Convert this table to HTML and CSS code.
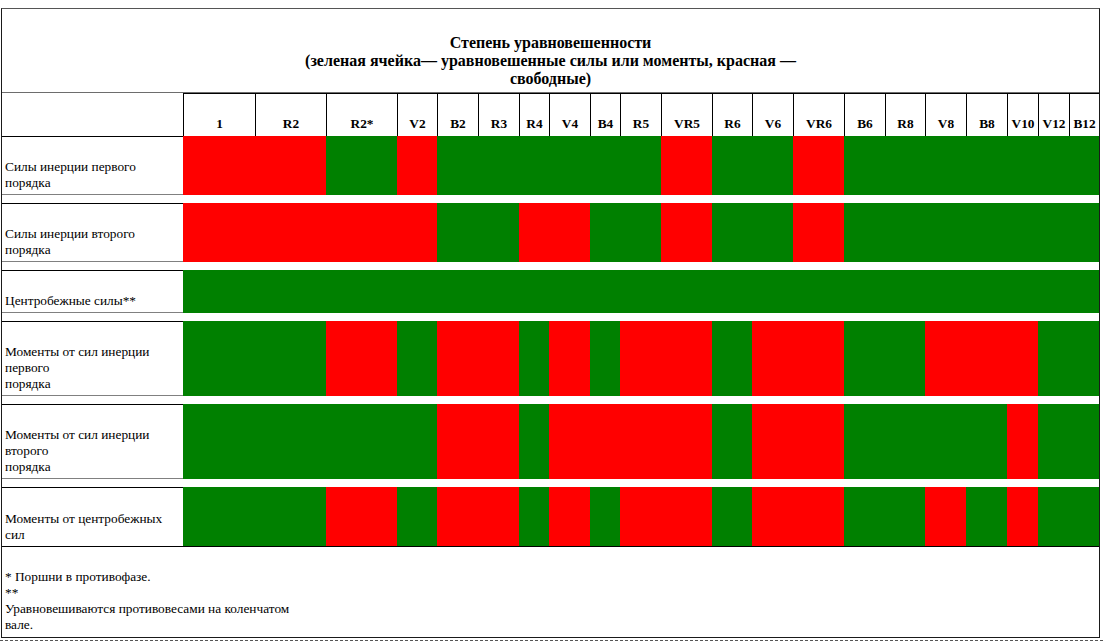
FILE: index.html
```html
<!DOCTYPE html>
<html lang="ru">
<head>
<meta charset="utf-8">
<title>Степень уравновешенности</title>
<link rel="stylesheet" href="styles.css">
</head>
<body>
<div class="page">
  <div class="sheet">
    <div class="title">
      <p class="title-text">Степень уравновешенности<br>(зеленая ячейка— уравновешенные силы или моменты, красная — свободные)</p>
    </div>
    <div class="row head">
      <div class="hcell blank"></div>
      <div class="hcell">1</div><div class="hcell">R2</div><div class="hcell">R2*</div><div class="hcell">V2</div><div class="hcell">B2</div><div class="hcell">R3</div><div class="hcell">R4</div><div class="hcell">V4</div><div class="hcell">B4</div><div class="hcell">R5</div><div class="hcell">VR5</div><div class="hcell">R6</div><div class="hcell">V6</div><div class="hcell">VR6</div><div class="hcell">B6</div><div class="hcell">R8</div><div class="hcell">V8</div><div class="hcell">B8</div><div class="hcell">V10</div><div class="hcell">V12</div><div class="hcell">B12</div>
    </div>

    <div class="row data h59">
      <div class="label">Силы инерции первого<br>порядка</div>
      <div class="c r"></div><div class="c r"></div><div class="c g"></div><div class="c r"></div><div class="c g"></div><div class="c g"></div><div class="c g"></div><div class="c g"></div><div class="c g"></div><div class="c g"></div><div class="c r"></div><div class="c g"></div><div class="c g"></div><div class="c r"></div><div class="c g"></div><div class="c g"></div><div class="c g"></div><div class="c g"></div><div class="c g"></div><div class="c g"></div><div class="c g"></div>
    </div>
    <div class="gap"></div>

    <div class="row data h59">
      <div class="label">Силы инерции второго<br>порядка</div>
      <div class="c r"></div><div class="c r"></div><div class="c r"></div><div class="c r"></div><div class="c g"></div><div class="c g"></div><div class="c r"></div><div class="c r"></div><div class="c g"></div><div class="c g"></div><div class="c r"></div><div class="c g"></div><div class="c g"></div><div class="c r"></div><div class="c g"></div><div class="c g"></div><div class="c g"></div><div class="c g"></div><div class="c g"></div><div class="c g"></div><div class="c g"></div>
    </div>
    <div class="gap"></div>

    <div class="row data h43">
      <div class="label">Центробежные силы**</div>
      <div class="c g span"></div>
    </div>
    <div class="gap"></div>

    <div class="row data h75">
      <div class="label">Моменты от сил инерции<br>первого<br>порядка</div>
      <div class="c g"></div><div class="c g"></div><div class="c r"></div><div class="c g"></div><div class="c r"></div><div class="c r"></div><div class="c g"></div><div class="c r"></div><div class="c g"></div><div class="c r"></div><div class="c r"></div><div class="c g"></div><div class="c r"></div><div class="c r"></div><div class="c g"></div><div class="c g"></div><div class="c r"></div><div class="c r"></div><div class="c r"></div><div class="c g"></div><div class="c g"></div>
    </div>
    <div class="gap"></div>

    <div class="row data h75">
      <div class="label">Моменты от сил инерции<br>второго<br>порядка</div>
      <div class="c g"></div><div class="c g"></div><div class="c g"></div><div class="c g"></div><div class="c r"></div><div class="c r"></div><div class="c g"></div><div class="c r"></div><div class="c r"></div><div class="c r"></div><div class="c r"></div><div class="c g"></div><div class="c r"></div><div class="c r"></div><div class="c g"></div><div class="c g"></div><div class="c g"></div><div class="c g"></div><div class="c r"></div><div class="c g"></div><div class="c g"></div>
    </div>
    <div class="gap"></div>

    <div class="row data h59 last">
      <div class="label">Моменты от центробежных<br>сил</div>
      <div class="c g"></div><div class="c g"></div><div class="c r"></div><div class="c g"></div><div class="c r"></div><div class="c r"></div><div class="c g"></div><div class="c r"></div><div class="c g"></div><div class="c r"></div><div class="c r"></div><div class="c g"></div><div class="c r"></div><div class="c r"></div><div class="c g"></div><div class="c g"></div><div class="c r"></div><div class="c g"></div><div class="c r"></div><div class="c g"></div><div class="c g"></div>
    </div>

    <div class="footer">
      <p class="note">* Поршни в противофазе.<br>**<br>Уравновешиваются противовесами на коленчатом<br>вале.</p>
    </div>
  </div>
  <div class="dash"></div>
</div>
</body>
</html>
```

FILE: styles.css
```css
* { box-sizing: border-box; }

html, body {
  margin: 0;
  padding: 0;
  background: #ffffff;
}

body {
  font-family: "Liberation Serif", "Times New Roman", serif;
  color: #000;
}

.page {
  padding: 8px 0 0 0;
  width: 1103px;
}

.sheet {
  margin-left: 1px;
  width: 1099px;
  border: 1px solid #1a1a1a;
  border-top-color: #555;
}

.title {
  height: 84px;
  border-bottom: 1px solid #6d6d6d;
  display: flex;
  align-items: flex-end;
  justify-content: center;
  padding-bottom: 4px;
}

.title-text {
  margin: 0;
  max-width: 510px;
  text-align: center;
  font-weight: bold;
  font-size: 16px;
  line-height: 18px;
}

.row {
  display: grid;
  grid-template-columns: 181px 72px 71px 71px 40px 41px 41px 30px 41px 30px 41px 51px 40px 41px 51px 41px 40px 41px 41px 31px 31px 30px;
}

.head {
  height: 43px;
}

.hcell {
  border-left: 1px solid #000;
  border-top: 1px solid #000;
  display: flex;
  align-items: flex-end;
  justify-content: center;
  font-weight: bold;
  font-size: 13.33px;
  line-height: 16px;
  padding-bottom: 4px;
}

.hcell.blank {
  border: none;
}

.h59 { height: 59px; }
.h43 { height: 43px; }
.h75 { height: 75px; }

.label {
  border-top: 1px solid #000;
  border-bottom: 1px solid #808080;
  display: flex;
  align-items: flex-end;
  padding: 0 0 3px 3px;
  font-size: 13.33px;
  line-height: 16px;
  white-space: nowrap;
}

.last .label {
  border-bottom: none;
}

.c.r { background: #ff0000; }
.c.g { background: #008000; }

.c.span {
  grid-column: 2 / -1;
}

.gap {
  height: 8px;
}

.footer {
  height: 91px;
  border-top: 1px solid #000;
  display: flex;
  align-items: flex-end;
  padding: 0 0 4px 3px;
}

.note {
  margin: 0;
  font-size: 13.33px;
  line-height: 16px;
  white-space: nowrap;
}

.dash {
  margin-top: 2px;
  border-top: 1px dashed #555;
  width: 1103px;
}
```
